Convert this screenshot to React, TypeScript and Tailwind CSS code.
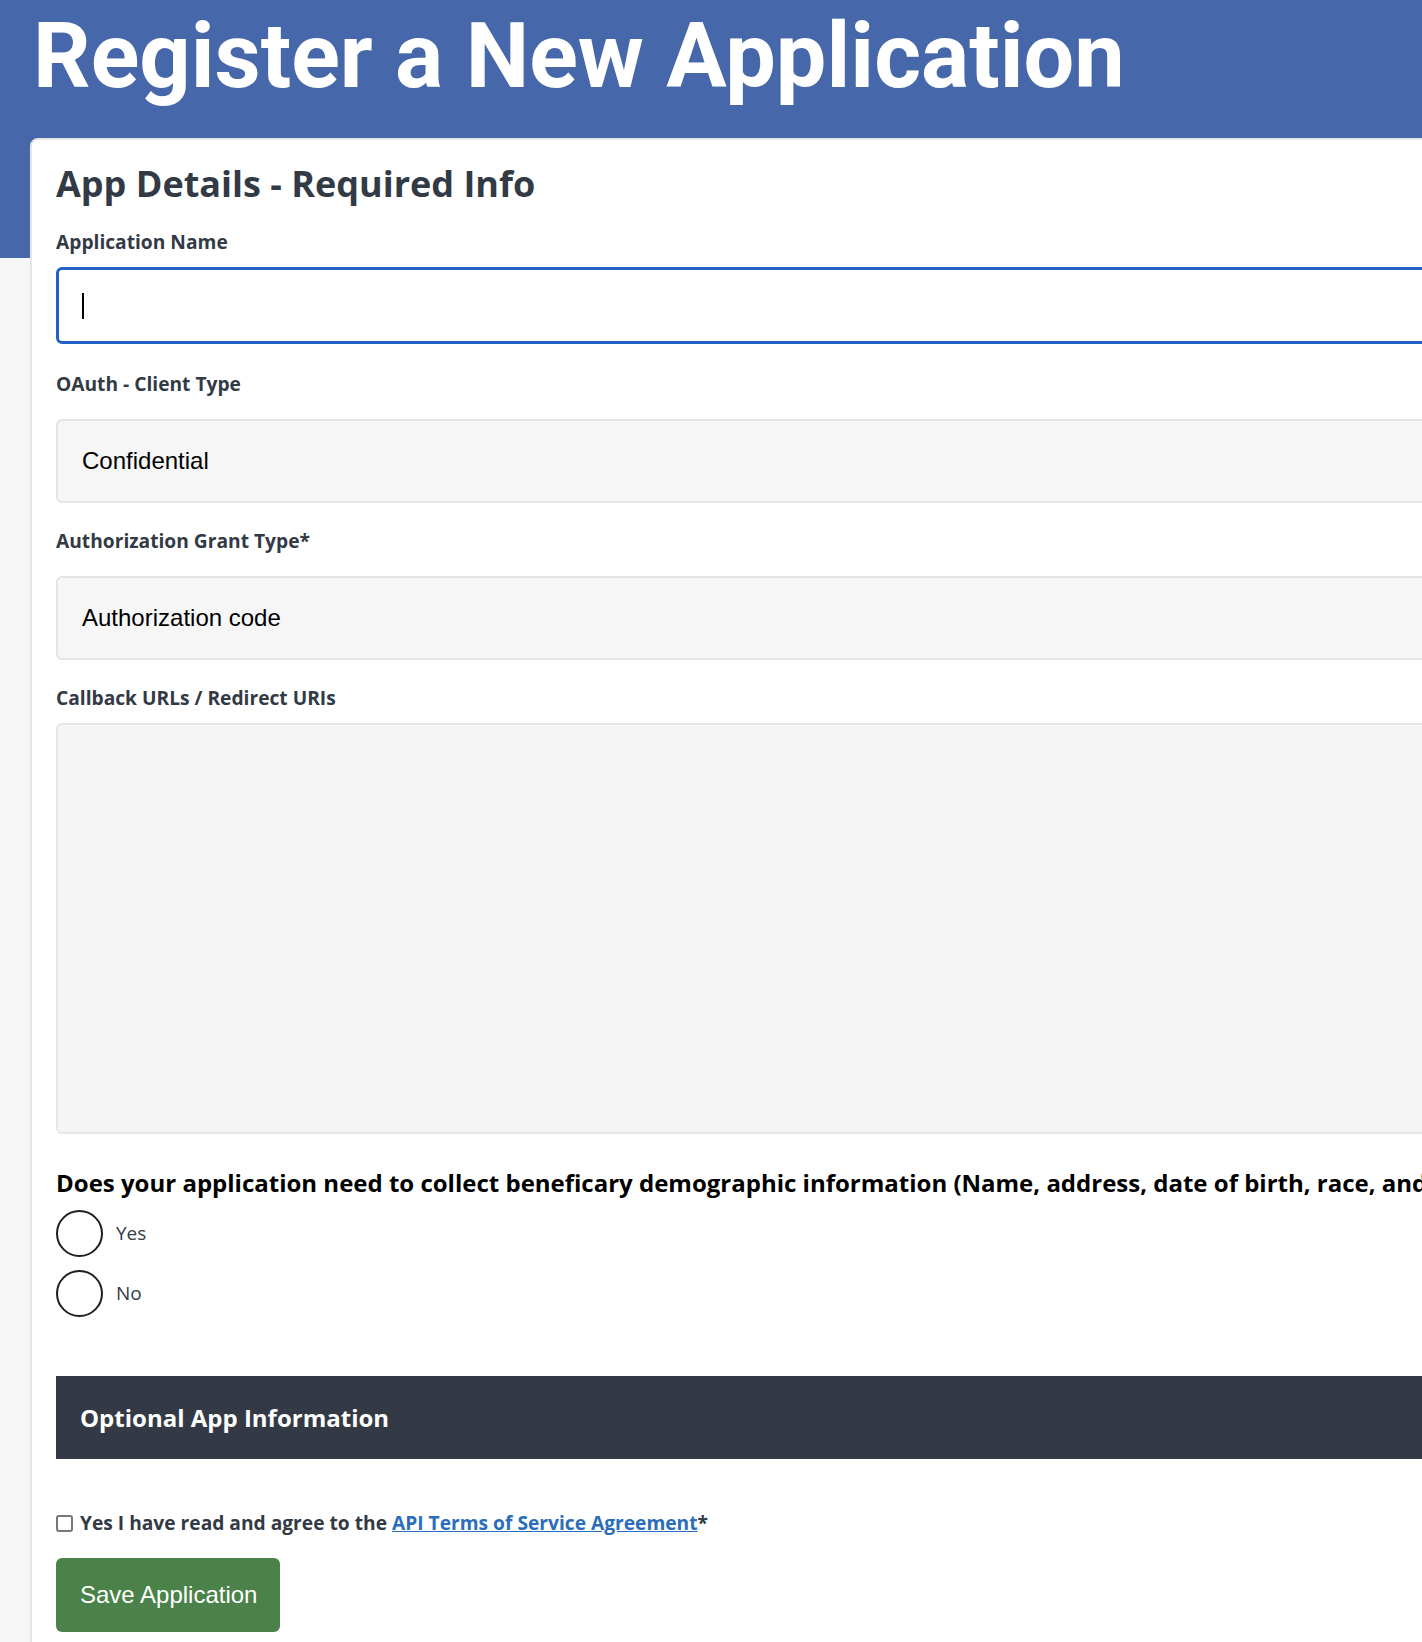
import React from "react";

const sans = "font-['Open_Sans',sans-serif]";

export default function App() {
  return (
    <div className={`h-[1642px] w-full overflow-hidden bg-[#f6f6f6] ${sans}`}>
      <div className="h-[258px] bg-[#4667a9] pl-[33px] pt-[12px]">
        <h1 className="whitespace-nowrap font-['Roboto',sans-serif] text-[90px] font-bold leading-[90px] text-white">
          Register a New Application
        </h1>
      </div>
      <div className="relative -mt-[120px] ml-[30px] w-[1900px] rounded-tl-lg border-2 border-[#e6e6e6] bg-white pl-6 pt-[22px] pb-10">
        <h2 className="text-[36px] font-bold leading-[1.2] text-[#323a45]">App Details - Required Info</h2>

        <div className="mt-[25px] text-[19.2px] font-bold leading-[1.3] text-[#323a45]">Application Name</div>
        <div className="mt-[12px] flex h-[77px] items-center rounded-md border-[3px] border-[#2163c8] bg-white pl-[23px]">
          <div className="h-[26px] w-[2px] bg-black" />
        </div>

        <div className="mt-[28px] text-[19.2px] font-bold leading-[1.3] text-[#323a45]">OAuth - Client Type</div>
        <div className="mt-[22px] flex h-[84px] items-center rounded-md border-2 border-[#e4e4e4] bg-[#f6f6f6] pl-6 font-['Liberation_Sans',Arial,sans-serif] text-[24px] text-black">
          Confidential
        </div>

        <div className="mt-[26px] text-[19.2px] font-bold leading-[1.3] text-[#323a45]">Authorization Grant Type*</div>
        <div className="mt-[22px] flex h-[84px] items-center rounded-md border-2 border-[#e4e4e4] bg-[#f6f6f6] pl-6 font-['Liberation_Sans',Arial,sans-serif] text-[24px] text-black">
          Authorization code
        </div>

        <div className="mt-[26px] text-[19.2px] font-bold leading-[1.3] text-[#323a45]">Callback URLs / Redirect URIs</div>
        <div className="mt-[12px] h-[411px] rounded-md border-2 border-[#e6e6e6] bg-[#f5f5f5]" />

        <div className="mt-[33px] whitespace-nowrap text-[24px] font-bold leading-[1.3] text-black">
          Does your application need to collect beneficary demographic information (Name, address, date of birth, race, and sex)?
        </div>
        <div className="mt-[12px] flex flex-col gap-[13px]">
          {["Yes", "No"].map((l) => (
            <label key={l} className="flex items-center gap-[13px]">
              <span className="h-[47px] w-[47px] rounded-full border-2 border-[#1f1f1f] bg-white" />
              <span className="text-[19px] text-[#323a45]">{l}</span>
            </label>
          ))}
        </div>

        <div className="mt-[59px] flex h-[83px] items-center bg-[#343a45] pl-6 text-[24px] font-bold text-white">
          Optional App Information
        </div>

        <div className="mt-[52px] flex items-center gap-[7px] text-[19.2px] font-bold leading-[1.3] text-[#323a45]">
          <span className="h-[17px] w-[17px] rounded-[3px] border-2 border-[#777] bg-white" />
          <span>
            Yes I have read and agree to the{" "}
            <a className="text-[#2a6ebb] underline" href="#">
              API Terms of Service Agreement
            </a>
            *
          </span>
        </div>

        <button className="mt-[22px] h-[74px] w-[224px] rounded-md bg-[#4a8249] pl-6 text-left font-['Liberation_Sans',Arial,sans-serif] text-[24px] text-white">
          Save Application
        </button>
      </div>
    </div>
  );
}
